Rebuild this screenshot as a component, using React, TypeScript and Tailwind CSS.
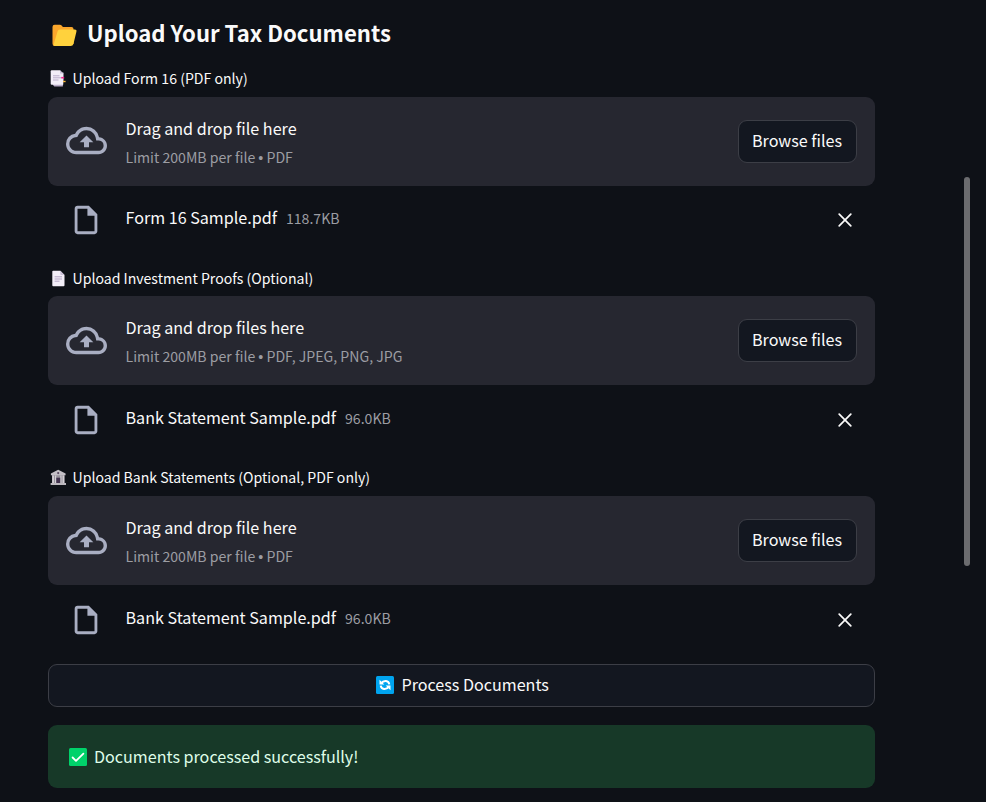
import type { ReactNode } from "react";

function FolderIcon() {
  return (
    <svg width="26" height="23" viewBox="0 0 26 23" className="mt-px block shrink-0">
      <path d="M1.5 3Q1.5 .8 3.7.8H8.9Q9.9.8 10.6 1.6L11.9 3H20.5Q22.5 3 22.5 5V20L3.5 22Q1.5 22 1.5 19.5Z" fill="#fba72c" />
      <path d="M6.6 7.2Q7.1 5.4 9 5.4H23.6Q26 5.4 25.4 7.8L22.5 19.8Q21.9 22.1 19.6 22.1H3.8Q2.2 22.1 2.7 20.3Z" fill="#ffd23d" />
    </svg>
  );
}

function BookmarkTabsIcon() {
  return (
    <svg width="16" height="17" viewBox="0 0 16 17" className="mt-[0.5px] block shrink-0">
      <path d="M3 2.5H13.5V10L12.8 16.5H4.3L3 15Z" fill="#b9acc8" />
      <path d="M1.7.3H10L13.2 3.4V14.8H1.7Q.7 14.8.7 13.8V1.3Q.7.3 1.7.3Z" fill="#f3eef8" />
      <path d="M10 .3L13.2 3.4H10Z" fill="#cdc2d9" />
      <path d="M3 5.8H9.5M3 7.8H11M3 10H8.5" stroke="#b4a5c5" strokeWidth=".9" />
      <path d="M11.2 6.9H14.2V8.5H11.2Z" fill="#f0288c" />
      <path d="M13 10.8H15.6V12.2H13Z" fill="#f5b83c" />
    </svg>
  );
}

function PageIcon() {
  return (
    <svg width="16" height="17" viewBox="0 0 16 17" className="mt-[0.5px] block shrink-0">
      <path d="M3.2.8H10.3L14.5 5V15.3Q14.5 16.2 13.6 16.2H3.2Q2.3 16.2 2.3 15.3V1.7Q2.3.8 3.2.8Z" fill="#f3eef8" />
      <path d="M10.3.8L14.5 5H11.2Q10.3 5 10.3 4.1Z" fill="#cdc2d9" />
      <path d="M4.6 6.8H12M4.6 9H12M4.6 11.2H9.5" stroke="#b4a5c5" strokeWidth="1" />
    </svg>
  );
}

function BankIcon() {
  return (
    <svg width="16" height="17" viewBox="0 0 16 17" className="mt-[0.5px] block shrink-0">
      <path d="M2 6H14.5V14H2Z" fill="#99959d" />
      <path d="M8.2.7L15.6 4.5V6.3H.9V4.5Z" fill="#c4c0c6" />
      <path d="M.6 14H16V16H.6Z" fill="#bcb8be" />
      <path d="M2.2 6.5H4V14H2.2ZM5 6.5H6.2V14H5ZM10.3 6.5H11.5V14H10.3ZM12.6 6.5H14.3V14H12.6Z" fill="#d2ced4" />
      <path d="M6.3 8.7H10.2V14H6.3Z" fill="#43334f" />
      <circle cx="8.2" cy="4.1" r="1.1" fill="#56475f" />
    </svg>
  );
}

function CloudUpload() {
  return (
    <svg width="41" height="41" viewBox="0 0 24 24" fill="#a9aec2" className="mt-[-0.6px] block shrink-0">
      <path d="M19.35 10.04A7.49 7.49 0 0012 4C9.11 4 6.6 5.64 5.35 8.04A5.994 5.994 0 000 14c0 3.31 2.69 6 6 6h13c2.76 0 5-2.24 5-5 0-2.64-2.05-4.78-4.65-4.96zM19 18H6c-2.21 0-4-1.79-4-4 0-2.05 1.53-3.76 3.56-3.97l1.07-.11.5-.95A5.469 5.469 0 0112 6c2.62 0 4.88 1.86 5.39 4.43l.3 1.5 1.53.11A2.98 2.98 0 0122 15c0 1.65-1.35 3-3 3zM8 13h2.55v3h2.9v-3H16l-4-4z" />
    </svg>
  );
}

function FileIcon() {
  return (
    <svg width="34" height="34" viewBox="0 0 24 24" fill="#a9aec2" className="block shrink-0">
      <path d="M14 2H6c-1.1 0-1.99.9-1.99 2L4 20c0 1.1.89 2 1.99 2H18c1.1 0 2-.9 2-2V8l-6-6zM6 20V4h7v5h5v11H6z" />
    </svg>
  );
}

interface UploadProps {
  icon: ReactNode;
  label: string;
  prompt: string;
  formats: string;
  file: string;
  size: string;
}

function Upload({ icon, label, prompt, formats, file, size }: UploadProps) {
  return (
    <section className="h-[199.65px]">
      <div className="flex h-[27px] gap-[6.5px] pl-0.5 text-[14.1px] leading-[18px]">
        {icon}
        <span className="-mt-[0.6px]">{label}</span>
      </div>
      <div className="flex h-[89.1px] items-center rounded-[9px] bg-[#262730] px-[18px]">
        <CloudUpload />
        <div className="ml-[18.5px] flex-1 pt-[3.8px]">
          <div className="text-[16.12px] leading-[29px]">{prompt}</div>
          <div className="text-[14.1px] leading-[29px] text-[#9c9da3]">
            Limit 200MB per file <span className="font-['Liberation_Sans',sans-serif]">•</span> {formats}
          </div>
        </div>
        <button className="h-[43px] w-[119px] rounded-[9px] border border-[#3c3e46] bg-[#131720] pb-[3px] pr-px text-[16.12px] leading-6">
          Browse files
        </button>
      </div>
      <div className="flex h-[69.4px] items-center pl-[21px] pr-[23px]">
        <FileIcon />
        <div className="ml-[22.5px] flex flex-1 items-baseline gap-[9px] pb-[5.2px]">
          <span className="text-[16.12px] leading-6">{file}</span>
          <span className="text-[14.1px] leading-6 text-[#9c9da3]">{size}</span>
        </div>
        <svg width="14" height="14" viewBox="0 0 14 14" className="block">
          <path d="M1.2 1.2L12.8 12.8M12.8 1.2L1.2 12.8" stroke="#fafafa" strokeWidth="1.7" strokeLinecap="round" />
        </svg>
      </div>
    </section>
  );
}

export default function App() {
  return (
    <div className="flex h-[802px] w-[986px] justify-between overflow-hidden whitespace-nowrap bg-[#0e1117] font-['Noto_Sans_CJK_SC',sans-serif] text-[#fafafa]">
      <main className="ml-12 w-[827px]">
        <h1 className="flex h-[69.6px] items-start gap-[10px] pl-[3px] pt-[23px] text-[22.1px] font-bold leading-6">
          <FolderIcon />
          <span className="-mt-[3px]">Upload Your Tax Documents</span>
        </h1>
        <Upload
          icon={<BookmarkTabsIcon />}
          label="Upload Form 16 (PDF only)"
          prompt="Drag and drop file here"
          formats="PDF"
          file="Form 16 Sample.pdf"
          size="118.7KB"
        />
        <Upload
          icon={<PageIcon />}
          label="Upload Investment Proofs (Optional)"
          prompt="Drag and drop files here"
          formats="PDF, JPEG, PNG, JPG"
          file="Bank Statement Sample.pdf"
          size="96.0KB"
        />
        <Upload
          icon={<BankIcon />}
          label="Upload Bank Statements (Optional, PDF only)"
          prompt="Drag and drop file here"
          formats="PDF"
          file="Bank Statement Sample.pdf"
          size="96.0KB"
        />
        <button className="-mt-[4.55px] flex h-[43px] w-full items-center justify-center gap-[7px] rounded-[9px] border border-[#3c3e46] bg-[#131720] pl-[2.3px] text-[16.12px] leading-6">
          <svg width="18" height="18" viewBox="0 0 18 18" className="-mt-px">
            <rect width="18" height="18" rx="1.5" fill="#00a4ef" />
            <path d="M5.2 7.4Q7 4.7 10 5Q12.8 5.4 13.3 8.4M12.8 10.6Q11 13.3 8 13Q5.2 12.6 4.7 9.6" fill="none" stroke="#fff" strokeWidth="2" />
            <path d="M3.5 3.8V8.6H8.3ZM14.5 14.2V9.4H9.7Z" fill="#fff" />
          </svg>
          <span className="-mt-[3px]">Process Documents</span>
        </button>
        <div className="mt-[18px] flex h-[62.9px] items-center gap-[7px] rounded-[9px] bg-[#173928] pl-[21px] text-[16.12px] leading-6 text-[#dffde9]">
          <svg width="18" height="18" viewBox="0 0 18 18" className="mt-[0.5px]">
            <rect width="18" height="18" rx="1.5" fill="#00d26a" />
            <path d="M3.6 9.5L7 12.8L14.4 5.6" fill="none" stroke="#fff" strokeWidth="1.8" strokeLinecap="round" strokeLinejoin="round" />
          </svg>
          <span className="-mt-[0.4px]">Documents processed successfully!</span>
        </div>
      </main>
      <div className="mr-4 mt-[177px] h-[389px] w-[6px] rounded-full bg-[#6b6c6f]" />
    </div>
  );
}
